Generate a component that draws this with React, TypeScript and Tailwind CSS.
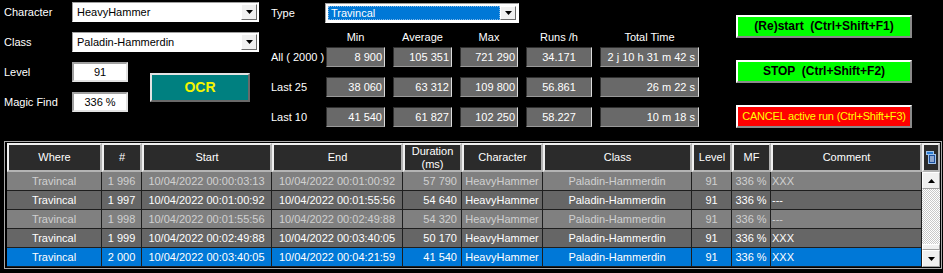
import React from "react"

const cols = [
  { name: "Where", cls: "w-[95px] justify-center" },
  { name: "#", cls: "w-[40px] justify-center" },
  { name: "Start", cls: "w-[130px] justify-center" },
  { name: "End", cls: "w-[131px] justify-center" },
  { name: "Duration\n(ms)", cls: "w-[59px] justify-end pr-[4px]" },
  { name: "Character", cls: "w-[81px] justify-center" },
  { name: "Class", cls: "w-[149px] justify-center" },
  { name: "Level", cls: "w-[40px] justify-center" },
  { name: "MF", cls: "w-[39px] justify-center" },
  { name: "Comment", cls: "w-[151px] justify-start pl-[1px]" },
]

const headerW = [
  "w-[95px]",
  "w-[40px]",
  "w-[130px]",
  "w-[131px]",
  "w-[59px]",
  "w-[81px]",
  "w-[149px]",
  "w-[40px]",
  "w-[39px]",
  "w-[151px]",
]

const runs = [
  { kind: "odd", v: ["Travincal", "1 996", "10/04/2022 00:00:03:13", "10/04/2022 00:01:00:92", "57 790", "HeavyHammer", "Paladin-Hammerdin", "91", "336 %", "XXX"] },
  { kind: "even", v: ["Travincal", "1 997", "10/04/2022 00:01:00:92", "10/04/2022 00:01:55:56", "54 640", "HeavyHammer", "Paladin-Hammerdin", "91", "336 %", "---"] },
  { kind: "odd", v: ["Travincal", "1 998", "10/04/2022 00:01:55:56", "10/04/2022 00:02:49:88", "54 320", "HeavyHammer", "Paladin-Hammerdin", "91", "336 %", "---"] },
  { kind: "even", v: ["Travincal", "1 999", "10/04/2022 00:02:49:88", "10/04/2022 00:03:40:05", "50 170", "HeavyHammer", "Paladin-Hammerdin", "91", "336 %", "XXX"] },
  { kind: "sel", v: ["Travincal", "2 000", "10/04/2022 00:03:40:05", "10/04/2022 00:04:21:59", "41 540", "HeavyHammer", "Paladin-Hammerdin", "91", "336 %", "XXX"] },
]

const rowStyle: Record<string, string> = {
  odd: "bg-[#808080] text-[#d0d0d0]",
  even: "bg-[#666666] text-white",
  sel: "bg-[#0078d7] text-white",
}

const stats = [
  { label: "All ( 2000 )", v: ["8 900", "105 351", "721 290", "34.171", "2 j 10 h 31 m 42 s"] },
  { label: "Last 25", v: ["38 060", "63 312", "109 800", "56.861", "26 m 22 s"] },
  { label: "Last 10", v: ["41 540", "61 827", "102 250", "58.227", "10 m 18 s"] },
]

const statCols = [
  { name: "Min", w: "w-[59px]", cls: "w-[59px] justify-end pr-[2px]" },
  { name: "Average", w: "w-[59px]", cls: "w-[59px] justify-end pr-[2px]" },
  { name: "Max", w: "w-[58px]", cls: "w-[58px] justify-end pr-[2px]" },
  { name: "Runs /h", w: "w-[66px]", cls: "w-[66px] justify-center" },
  { name: "Total Time", w: "w-[99px]", cls: "w-[99px] justify-end pr-[3px]" },
]

function Arrow({ up }: { up?: boolean }) {
  return (
    <svg width="7" height="4" viewBox="0 0 7 4">
      <path d={up ? "M0 4h7L3.5 0z" : "M0 0h7L3.5 4z"} fill="#000" />
    </svg>
  )
}

function DropButton() {
  return (
    <div className="w-[16px] h-full flex items-center justify-center bg-[#f0f0f0] border border-t-white border-l-white border-r-[#696969] border-b-[#696969]">
      <Arrow />
    </div>
  )
}

function Combo({ value }: { value: string }) {
  return (
    <div className="w-[187px] h-[20px] flex bg-white border border-t-[#a0a0a0] border-l-[#a0a0a0] border-r-white border-b-white p-[1px]">
      <div className="flex-1 flex items-center pl-[3px] text-black">{value}</div>
      <DropButton />
    </div>
  )
}

function Field({ value }: { value: string }) {
  return (
    <div className="w-[56px] h-[20px] flex items-center justify-center bg-white text-black border-2 border-t-[#a0a0a0] border-l-[#a0a0a0] border-r-[#e3e3e3] border-b-[#e3e3e3]">
      {value}
    </div>
  )
}

function ListIcon() {
  return (
    <svg width="10" height="13" viewBox="0 0 10 13">
      <rect x="0.5" y="0.5" width="7" height="3" fill="#2b7cd3" stroke="#9fc3ec" />
      <rect x="2.5" y="3.5" width="7" height="9" fill="#1c4f9c" stroke="#9fc3ec" />
      <path d="M4 6h4M4 8h4M4 10h4" stroke="#ffffff" />
    </svg>
  )
}

export default function App() {
  return (
    <div className="w-[943px] h-[273px] bg-black text-white text-[11px] leading-[13px] font-['Liberation_Sans',Arial,sans-serif] overflow-hidden">
      <div className="h-[141px] flex">
        {/* left form */}
        <div className="w-[260px] pl-[4px] pt-[2px] flex flex-col gap-[10px]">
          <div className="h-[20px] flex items-center">
            <span className="w-[68px]">Character</span>
            <Combo value="HeavyHammer" />
          </div>
          <div className="h-[20px] flex items-center">
            <span className="w-[68px]">Class</span>
            <Combo value="Paladin-Hammerdin" />
          </div>
          <div className="flex items-center">
            <div className="flex flex-col gap-[10px]">
              <div className="h-[20px] flex items-center">
                <span className="w-[68px]">Level</span>
                <Field value="91" />
              </div>
              <div className="h-[20px] flex items-center">
                <span className="w-[68px]">Magic Find</span>
                <Field value="336 %" />
              </div>
            </div>
            <button className="ml-[22px] w-[100px] h-[29px] bg-[#008080] text-[#f5f500] font-bold text-[14px] border-2 border-t-[#e3e3e3] border-l-[#e3e3e3] border-r-[#696969] border-b-[#696969]">
              OCR
            </button>
          </div>
        </div>

        {/* type + stats */}
        <div className="w-[476px] pt-[3px] pl-[11px] flex flex-col">
          <div className="h-[20px] flex items-center">
            <span className="w-[54px]">Type</span>
            <div className="w-[194px] h-[20px] flex bg-white p-[2px] border border-t-[#a0a0a0] border-l-[#a0a0a0] border-r-white border-b-white">
              <div className="flex-1 flex items-center bg-[#0078d7] pl-[2px] text-white border border-dotted border-[#7fb6e8]">
                Travincal
              </div>
              <DropButton />
            </div>
          </div>
          <div className="mt-[5px] h-[19px] flex items-center">
            <span className="w-[55px] shrink-0" />
            <div className="flex gap-[8px]">
              {statCols.map((c) => (
                <span key={c.name} className={`${c.w} text-center`}>
                  {c.name}
                </span>
              ))}
            </div>
          </div>
          <div className="flex flex-col gap-[10px]">
            {stats.map((s) => (
              <div key={s.label} className="h-[20px] flex items-center">
                <span className="w-[55px] shrink-0 whitespace-nowrap">{s.label}</span>
                <div className="flex gap-[8px]">
                  {s.v.map((v, i) => (
                    <div
                      key={i}
                      className={`${statCols[i].cls} h-[20px] flex items-center whitespace-nowrap bg-[#696969] text-white border border-t-[#303030] border-l-[#303030] border-r-[#dcdcdc] border-b-[#9a9a9a]`}
                    >
                      {v}
                    </div>
                  ))}
                </div>
              </div>
            ))}
          </div>
        </div>

        {/* action buttons */}
        <div className="pt-[15px] flex flex-col gap-[22px]">
          <button className="w-[176px] h-[23px] bg-[#00ff00] text-black font-bold text-[12px] whitespace-pre border-2 border-t-white border-l-white border-r-[#8a8a8a] border-b-[#8a8a8a]">
            (Re)start  (Ctrl+Shift+F1)
          </button>
          <button className="w-[176px] h-[23px] bg-[#00ff00] text-black font-bold text-[12px] whitespace-pre border-2 border-t-white border-l-white border-r-[#8a8a8a] border-b-[#8a8a8a]">
            STOP  (Ctrl+Shift+F2)
          </button>
          <button className="w-[176px] h-[23px] bg-[#ff0000] text-[#ffff00] text-[11px] tracking-[-0.2px] whitespace-nowrap border-2 border-t-white border-l-white border-r-[#8a8a8a] border-b-[#8a8a8a]">
            CANCEL active run (Ctrl+Shift+F3)
          </button>
        </div>
      </div>

      {/* runs table */}
      <div className="ml-[4px] w-[938px] border border-[#a9a9a9] pl-[2px] pr-[1px] py-[1px]">
        <div className="flex h-[29px]">
          {cols.map((c, i) => (
            <div
              key={c.name}
              className={`${headerW[i]} h-full flex items-center justify-center text-center whitespace-pre-line bg-[#2b2b2b] border-2 border-t-[#f0f0f0] border-l-[#f0f0f0] border-r-[#b4b4b4] border-b-[#b4b4b4]`}
            >
              {c.name}
            </div>
          ))}
          <div className="w-[18px] h-full flex items-center justify-center bg-[#2b2b2b] border-2 border-t-[#f0f0f0] border-l-[#f0f0f0] border-r-[#b4b4b4] border-b-[#b4b4b4]">
            <ListIcon />
          </div>
        </div>
        <div className="flex">
          <div className="flex flex-col">
            {runs.map((r) => (
              <div key={r.v[1]} className={`flex h-[19px] ${rowStyle[r.kind]}`}>
                {r.v.map((v, i) => (
                  <div
                    key={i}
                    className={`${cols[i].cls} h-full flex items-center whitespace-nowrap border-r border-b border-[#1e1e1e]`}
                  >
                    {v}
                  </div>
                ))}
              </div>
            ))}
          </div>
          <div className="w-[18px] h-[95px] flex flex-col">
            <div className="h-[17px] flex items-center justify-center bg-[#f0f0f0] border border-t-white border-l-white border-r-[#a0a0a0] border-b-[#a0a0a0]">
              <Arrow up />
            </div>
            <div className="flex-1 bg-[repeating-conic-gradient(#c8c8c8_0_25%,#ffffff_0_50%)] bg-size-[2px_2px]" />
            <div className="h-[6px] bg-[#f0f0f0] border border-t-white border-l-white border-r-[#a0a0a0] border-b-[#a0a0a0]" />
            <div className="h-[17px] flex items-center justify-center bg-[#f0f0f0] border border-t-white border-l-white border-r-[#a0a0a0] border-b-[#a0a0a0]">
              <Arrow />
            </div>
          </div>
        </div>
      </div>
    </div>
  )
}
